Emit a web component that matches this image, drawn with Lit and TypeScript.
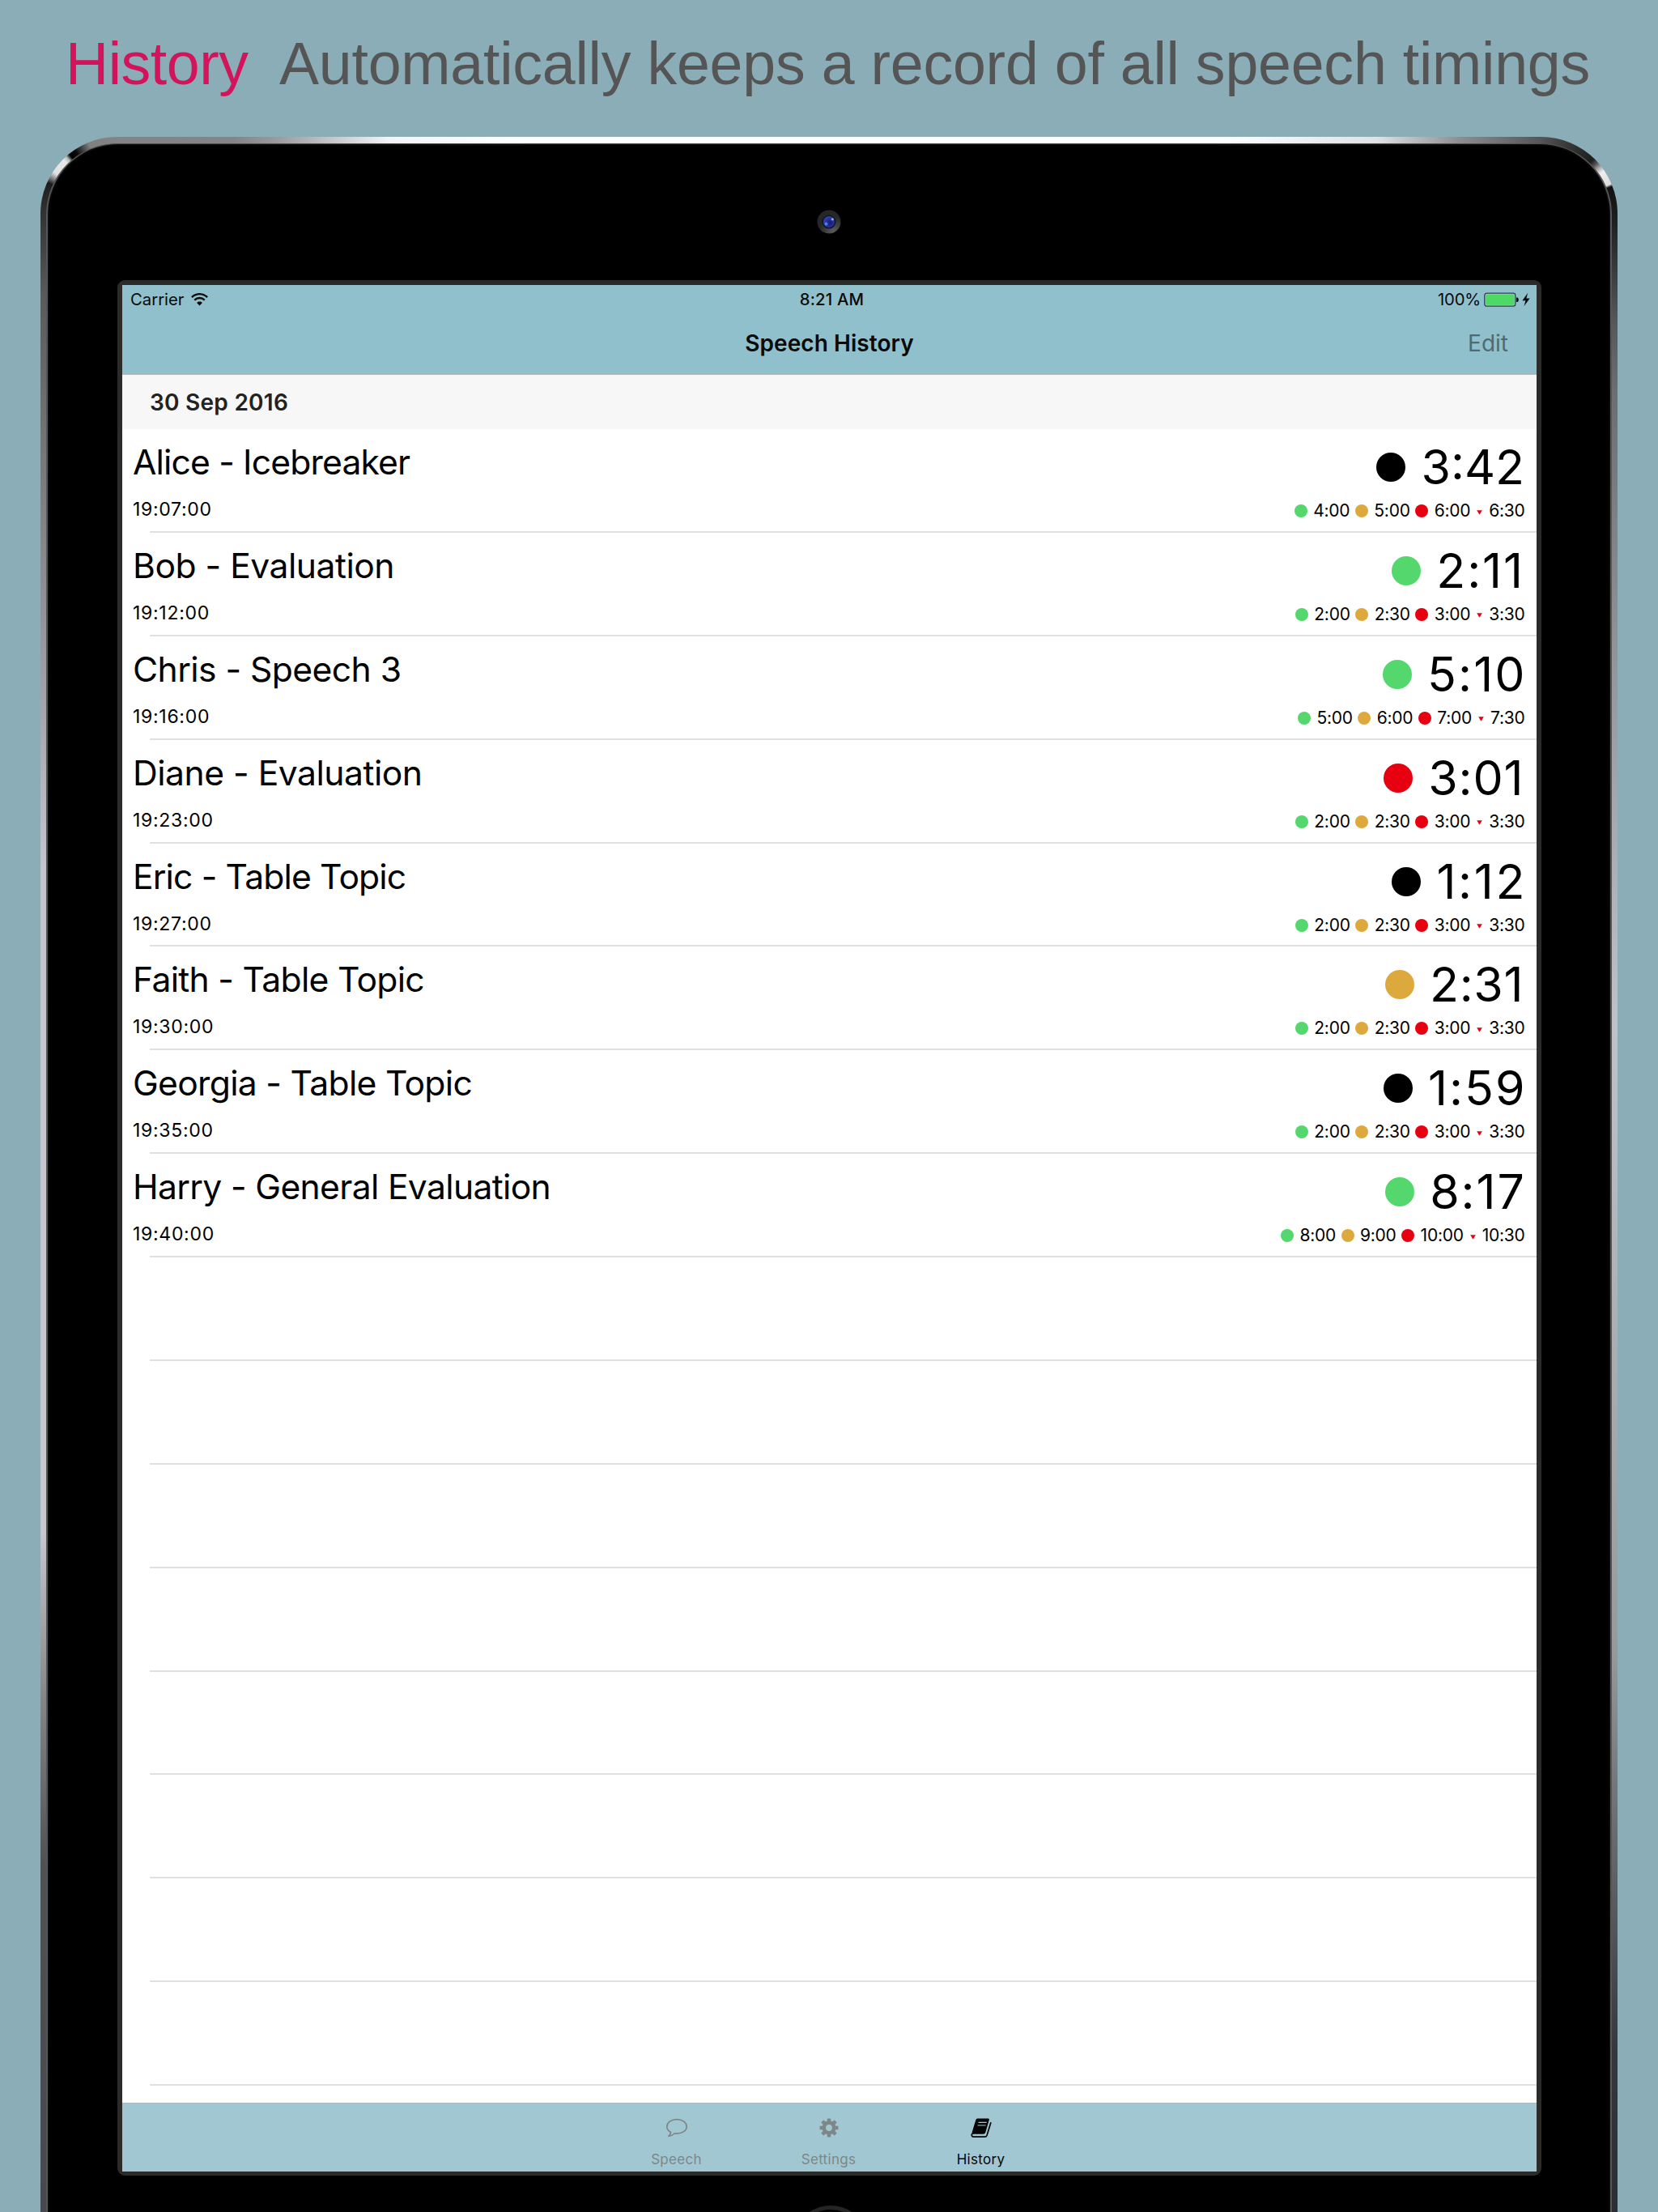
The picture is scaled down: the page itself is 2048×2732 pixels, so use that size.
import { LitElement, html, css, svg } from "lit";
import { customElement } from "lit/decorators.js";
import { styleMap } from "lit/directives/style-map.js";

type Tone = "black" | "green" | "amber" | "red";

interface Speech {
  title: string;
  track: number;
  at: string;
  tone: Tone;
  total: string;
  totalTrack: number;
  totalEnd: number;
  marks: string[];
}

const SHORT = ["2:00", "2:30", "3:00", "3:30"];

const SPEECHES: Speech[] = [
  { title: "Alice - Icebreaker", track: -0.83, at: "19:07:00", tone: "black", total: "3:42", totalTrack: 0, totalEnd: 0.5, marks: ["4:00", "5:00", "6:00", "6:30"] },
  { title: "Bob - Evaluation", track: -0.48, at: "19:12:00", tone: "green", total: "2:11", totalTrack: 1.9, totalEnd: 0.6, marks: SHORT },
  { title: "Chris - Speech 3", track: -0.55, at: "19:16:00", tone: "green", total: "5:10", totalTrack: 2.1, totalEnd: -2.1, marks: ["5:00", "6:00", "7:00", "7:30"] },
  { title: "Diane - Evaluation", track: -0.48, at: "19:23:00", tone: "red", total: "3:01", totalTrack: 0.9, totalEnd: 1.1, marks: SHORT },
  { title: "Eric - Table Topic", track: -0.84, at: "19:27:00", tone: "black", total: "1:12", totalTrack: 2.7, totalEnd: -2.7, marks: SHORT },
  { title: "Faith - Table Topic", track: -0.68, at: "19:30:00", tone: "amber", total: "2:31", totalTrack: 0.7, totalEnd: 1.3, marks: SHORT },
  { title: "Georgia - Table Topic", track: -0.68, at: "19:35:00", tone: "black", total: "1:59", totalTrack: 2, totalEnd: -2, marks: SHORT },
  { title: "Harry - General Evaluation", track: -0.65, at: "19:40:00", tone: "green", total: "8:17", totalTrack: 1.9, totalEnd: -1.2, marks: ["8:00", "9:00", "10:00", "10:30"] },
];

const MARK_TONES: Tone[] = ["green", "amber", "red"];
const EMPTY_ROWS = 8;

const wifiIcon = html`<svg viewBox="0 0 21 16" width="21" height="16">
  <g fill="none" stroke="#0a0a0a" stroke-width="2.3">
    <path d="M0.9 5.1C6.3-0.2 14.7-0.2 20.1 5.1" />
    <path d="M4.2 8.6C7.9 5.1 13.1 5.1 16.8 8.6" />
  </g>
  <path d="M7.1 11.9C9 10 12 10 13.9 11.9L10.5 15.6Z" fill="#0a0a0a" />
</svg>`;

const batteryIcon = html`<svg viewBox="0 0 58 18" width="58" height="18">
  <rect x="0.8" y="1.2" width="38" height="16" rx="2.6" fill="#a6cdd6" stroke="#2c4248" stroke-width="1.3" />
  <rect x="2.2" y="2.6" width="35.2" height="13.2" rx="1.2" fill="#4cd964" />
  <path d="M40 6.4H41.4Q42.8 7 42.8 9.2Q42.8 11.4 41.4 12H40Z" fill="#0a0a0a" />
  <path d="M54.2 0.8L47.4 10.2H51.4L49.6 17L56.6 7.6H52.4Z" fill="#0a0a0a" />
</svg>`;

const cameraIcon = html`<svg class="camera" width="30" height="30" viewBox="0 0 30 30">
  <defs>
    <radialGradient id="ring" cx="0.68" cy="0.88" r="0.6"><stop offset="0" stop-color="#5c5c5c" /><stop offset="1" stop-color="#262728" /></radialGradient>
    <radialGradient id="lens" cx="0.6" cy="0.6" r="0.6"><stop offset="0" stop-color="#171c66" /><stop offset="1" stop-color="#3240bd" /></radialGradient>
  </defs>
  <circle cx="15" cy="15" r="14.500" fill="url(#ring)" />
  <circle cx="15" cy="15" r="8.600" fill="#14151c" />
  <circle cx="15" cy="15" r="7" fill="url(#lens)" />
  <circle cx="11.500" cy="17.500" r="2" fill="#3f86d8" />
  <circle cx="19.300" cy="11.800" r="1.600" fill="#8ea6e8" />
</svg>`;

const speechIcon = svg`<svg viewBox="0 0 30 30" width="30" height="30">
  <path d="M15 4.6C8.300 4.600 2.800 8.500 2.800 13.400C2.800 16.300 4.700 18.900 7.600 20.500C7.300 22.300 6.400 23.900 4.900 25.300C8.300 25 10.600 23.600 12.300 22C13.200 22.200 14.100 22.200 15 22.200C21.700 22.200 27.200 18.300 27.200 13.400C27.200 8.500 21.700 4.600 15 4.600Z" fill="none" stroke="currentColor" stroke-width="1.7" stroke-linejoin="round" />
</svg>`;

const gearIcon = svg`<svg viewBox="0 0 24 24" width="24" height="24">
  <g fill="currentColor">
    ${[0, 45, 90, 135].map(a => svg`<rect x="9.700" y="0.500" width="4.600" height="23" rx="0.900" transform=${`rotate(${a} 12 12)`} />`)}
  </g>
  <circle cx="12" cy="12" r="6.200" fill="none" stroke="currentColor" stroke-width="4.600" />
  <circle cx="12" cy="12" r="3.900" fill="#a1c8d2" />
</svg>`;

const bookIcon = svg`<svg viewBox="0 0 26 26" width="26" height="26">
  <path d="M8.400 1.500H21.600Q23.300 1.500 22.800 3.300L18.300 18.700Q17.700 20.700 15.600 20.700H3.600Q1.800 20.700 1.300 22.200Q1.100 20 2 17.500L6.300 3.200Q6.900 1.500 8.400 1.500Z" fill="currentColor" />
  <path d="M1.300 20.500Q0.900 24.200 3.600 24.200H17.300Q19.400 24.200 20.100 22.200L25 6.200" fill="none" stroke="currentColor" stroke-width="1.700" />
  <path d="M9.600 6.300H19.700M8.500 10H18.600" stroke="#a1c8d2" stroke-width="1.200" />
</svg>`;

@customElement("history-row")
class HistoryRow extends LitElement {
  static properties = { speech: { attribute: false } };
  declare speech: Speech;

  static styles = css`
    :host { display: block; box-sizing: border-box; font-family: Inter, "Liberation Sans", sans-serif; color: #000; }
    .row { display: flex; justify-content: space-between; height: 100%; box-sizing: border-box; padding: 0 14.500px 0 13px; }
    .left { display: flex; flex-direction: column; padding-top: 16px; }
    .title { font-size: 42.600px; line-height: 50px; white-space: pre; }
    .at { font-size: 23px; line-height: 28px; margin-top: 19px; letter-spacing: 0.700px; }
    .right { display: flex; flex-direction: column; align-items: flex-end; padding-top: 12px; }
    .total { display: flex; align-items: center; gap: 19px; font-size: 59px; line-height: 70px; height: 70px; }
    .marks { display: flex; align-items: center; height: 26px; margin-top: 6px; font-size: 21px; line-height: 26px; letter-spacing: -0.250px; }
    .dot { border-radius: 50%; width: 16px; height: 16px; margin: 0 7.500px 0 6.500px; }
    .big { width: 36px; height: 36px; margin: 0; }
    .tri { width: 7px; height: 6px; margin: 3px 8px 0 8px; }
    .black { background: #000; }
    .green { background: #54d76d; }
    .amber { background: #dea93c; }
    .red { background: #e60010; }
  `;

  render() {
    const s = this.speech;
    return html`<div class="row">
      <div class="left"><div class="title" style=${styleMap({ letterSpacing: `${s.track}px` })}>${s.title}</div><div class="at">${s.at}</div></div>
      <div class="right">
        <div class="total"><i class="dot big ${s.tone}"></i><span style=${styleMap({ letterSpacing: `${s.totalTrack}px`, marginRight: `${s.totalEnd}px` })}>${s.total}</span></div>
        <div class="marks">
          ${s.marks.map((m, i) => html`${i < 3
            ? html`<i class="dot ${MARK_TONES[i]}"></i>`
            : html`<svg class="tri" viewBox="0 0 7 6"><path d="M0.200 0.300H6.800L3.500 5.700Z" fill="#e60010" /></svg>`}<span>${m}</span>`)}
        </div>
      </div>
    </div>`;
  }
}

@customElement("app-root")
class AppRoot extends LitElement {
  static styles = css`
    :host { display: block; width: 2048px; height: 2732px; overflow: hidden; background: #8aadb7; font-family: Inter, "Liberation Sans", sans-serif; color: #0a0a0a; }
    .headline { display: flex; height: 169px; box-sizing: border-box; padding: 37px 0 0 81px; font-family: "Liberation Sans", Arial, sans-serif; font-size: 73.500px; line-height: 84px; white-space: pre; color: #555; letter-spacing: -0.220px; }
    .word { width: 264px; color: #d4145a; letter-spacing: -0.450px; }
    .device { position: relative; margin-left: 50px; width: 1948px; height: 2700px; box-sizing: border-box; padding: 9px; }
    .rim {
      position: absolute; inset: 0; border-radius: 95px 95px 0 0;
      background:
        conic-gradient(from 0deg at 100% 100%, #333 270deg, #222 290deg, #1a1a1a 294deg, #777 298deg, #e0e0de 303deg, #e8e8e8 315deg, #bbb 318deg, #000 321deg, #0a0a0a 326deg, #808080 338deg, #848484 360deg) 0 0 / 95px 95px no-repeat,
        conic-gradient(from 0deg at 0% 100%, #555 0deg, #3a3a3a 20deg, #1e1e1e 44deg, #555 48deg, #aaa 52deg, #eee 56deg, #ddd 67deg, #111 69deg, #1c1c1c 90deg) 100% 0 / 95px 95px no-repeat,
        linear-gradient(180deg, #333 95px, #5a5a5a 195px, #6b6b6d 310px, #95999d 622px, #c3c7cd 902px, #c5c9cd 1724px, #85898b 1921px, #4e5254 2135px, #444a4e 2561px) 0 0 / 20px 100% no-repeat,
        linear-gradient(180deg, #1c1c1c 95px, #555759 228px, #6b6d70 310px, #929598 639px, #bfc3c8 1099px, #999 1872px, #74777a 2037px, #54585b 2201px, #34373c 2366px, #2b2e33 2561px) 100% 0 / 20px 100% no-repeat,
        linear-gradient(90deg, #848484 95px, #858585 240px, #9a9a9a 290px, #f4f4f4 430px, #fff 600px, #fff 1450px, #e0e3e1 1650px, #909090 1750px, #555 1853px) 0 0 / 100% 20px no-repeat;
    }
    .lip { position: absolute; inset: 8px 7px 0 7px; border: 1px solid #555; border-width: 1px 2px 0; border-radius: 88px 88px 0 0; background: #000; box-shadow: inset 0 0 3px #2a2a2a; }
    .glass { position: relative; height: 100%; box-sizing: border-box; padding: 168px 0 0 86px; }
    .camera { position: absolute; left: 950px; top: 81px; }
    .home { position: absolute; left: 921px; top: 2546px; width: 82px; height: 82px; border-radius: 50%; border: 5px solid #242424; }
    .frame { box-sizing: border-box; width: 1759px; height: 2341px; border: 6px solid #2b2b2a; border-bottom-width: 5px; border-radius: 9px; display: flex; flex-direction: column; background: #fff; }
    .nav { height: 111px; box-sizing: border-box; background: #90c0cc; border-bottom: 1px solid #b9b9b9; display: flex; flex-direction: column; }
    .status { display: grid; grid-template-columns: 1fr auto 1fr; align-items: center; height: 35px; font-size: 20.300px; line-height: 35px; padding: 0 7px 0 10px; }
    .carrier, .power { display: flex; align-items: center; }
    .carrier { gap: 9px; }
    .power { justify-content: flex-end; gap: 4px; letter-spacing: -0.200px; }
    .clock { font-weight: 500; letter-spacing: 0.200px; padding-left: 3px; }
    .bar { display: grid; grid-template-columns: 1fr auto 1fr; font-size: 28px; height: 75px; line-height: 75px; }
    .name { font-weight: 600; letter-spacing: 0.060px; }
    .edit { text-align: right; color: #4f6b72; padding-right: 35px; }
    .section { height: 67px; box-sizing: border-box; background: #f7f7f7; padding: 1px 0 0 34px; font-size: 28px; line-height: 67px; font-weight: 600; color: #222; letter-spacing: 0.250px; }
    .list { flex: 1; overflow: hidden; }
    .cell { height: 127.880px; display: flex; flex-direction: column; }
    .cell history-row { flex: none; height: 125.880px; }
    .line { height: 2px; margin: auto 0 0 34px; background: #e0e0e1; }
    .tabs { height: 85px; box-sizing: border-box; border-top: 1px solid #b5b8b9; background: #a1c8d2; display: flex; justify-content: center; color: #7e8788; padding-right: 2px; }
    .tab { width: 188px; display: flex; flex-direction: column; align-items: center; font-size: 17px; line-height: 22px; letter-spacing: 0.300px; }
    .glyph { height: 53px; display: flex; align-items: center; justify-content: center; padding: 3px 0 2px; }
    .on { color: #050505; }
  `;

  render() {
    return html`
      <div class="headline"><div class="word">History</div><div class="pitch">Automatically keeps a record of all speech timings</div></div>
      <div class="device">
        <div class="rim"></div>
        <div class="lip"></div>
        <div class="glass">
          ${cameraIcon}
          <div class="frame">
            <div class="nav">
              <div class="status">
                <div class="carrier"><span>Carrier</span>${wifiIcon}</div>
                <div class="clock">8:21 AM</div>
                <div class="power"><span>100%</span>${batteryIcon}</div>
              </div>
              <div class="bar"><span></span><span class="name">Speech History</span><span class="edit">Edit</span></div>
            </div>
            <div class="section">30 Sep 2016</div>
            <div class="list">
              ${SPEECHES.map(s => html`<div class="cell"><history-row .speech=${s}></history-row><div class="line"></div></div>`)}
              ${Array.from({ length: EMPTY_ROWS }, () => html`<div class="cell"><div class="line"></div></div>`)}
            </div>
            <div class="tabs">
              <div class="tab"><div class="glyph">${speechIcon}</div>Speech</div>
              <div class="tab"><div class="glyph">${gearIcon}</div>Settings</div>
              <div class="tab on"><div class="glyph">${bookIcon}</div>History</div>
            </div>
          </div>
          <div class="home"></div>
        </div>
      </div>`;
  }
}
